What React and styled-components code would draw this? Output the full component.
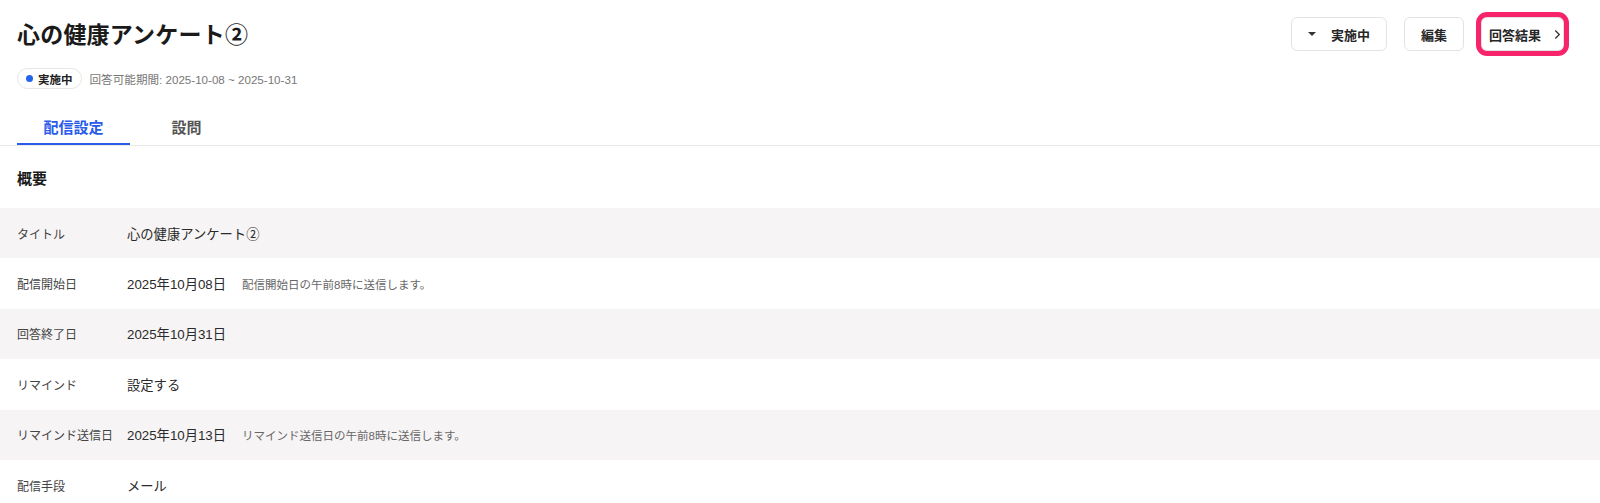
import React from "react";
import styled, { createGlobalStyle } from "styled-components";

const GlobalStyle = createGlobalStyle`
  body {
    margin: 0;
    background: #ffffff;
    font-family: "Liberation Sans", "Noto Sans CJK JP", sans-serif;
    color: #222;
  }
`;

const rows = [
  { label: "タイトル", value: "心の健康アンケート②" },
  { label: "配信開始日", value: "2025年10月08日", note: "配信開始日の午前8時に送信します。" },
  { label: "回答終了日", value: "2025年10月31日" },
  { label: "リマインド", value: "設定する" },
  { label: "リマインド送信日", value: "2025年10月13日", note: "リマインド送信日の午前8時に送信します。" },
  { label: "配信手段", value: "メール" },
];

const App = () => {
  return (
    <Page>
      <GlobalStyle />
      <Header>
        <TitleRow>
          <Title>心の健康アンケート②</Title>
          <Actions>
            <Button>
              <Caret />
              実施中
            </Button>
            <Button>編集</Button>
            <Button $highlight>
              回答結果
              <Chevron viewBox="0 0 8 12" width="7" height="11">
                <path d="M1.5 1.5 L6 6 L1.5 10.5" fill="none" stroke="#333" strokeWidth="1.5" />
              </Chevron>
            </Button>
          </Actions>
        </TitleRow>
        <Meta>
          <StatusBadge>
            <Dot />
            実施中
          </StatusBadge>
          <Period>回答可能期間: 2025-10-08 ~ 2025-10-31</Period>
        </Meta>
      </Header>

      <Tabs>
        <Tab $active>配信設定</Tab>
        <Tab>設問</Tab>
      </Tabs>

      <SectionTitle>概要</SectionTitle>

      <List>
        {rows.map((row, i) => (
          <Row key={row.label} $striped={i % 2 === 0}>
            <Label>{row.label}</Label>
            <Value>{row.value}</Value>
            {row.note && <Note>{row.note}</Note>}
          </Row>
        ))}
      </List>
    </Page>
  );
};

const Page = styled.div`
  width: 100%;
`;

const Header = styled.header`
  padding: 17px 36px 0 17px;
`;

const TitleRow = styled.div`
  display: flex;
  justify-content: space-between;
  align-items: center;
  height: 34px;
`;

const Title = styled.h1`
  margin: 0 0 3px;
  font-size: 23px;
  font-weight: 700;
  color: #1a1a1a;
  letter-spacing: 0.2px;
`;

const Actions = styled.div`
  display: flex;
  gap: 17px;
`;

const Button = styled.button`
  display: flex;
  align-items: center;
  gap: ${(p) => (p.$highlight ? "13px" : "15px")};
  height: 34px;
  padding: ${(p) => (p.$highlight ? "0 2px 0 7px" : "0 16px")};
  background: #fff;
  border: 1px solid #e3e3e3;
  border-radius: 6px;
  font-family: "Liberation Sans", "Noto Sans CJK JP", sans-serif;
  font-size: 13px;
  font-weight: 600;
  color: #262626;
  outline: ${(p) => (p.$highlight ? "5px solid #f7236b" : "none")};
  outline-offset: 0;
  cursor: pointer;
`;

const Caret = styled.span`
  width: 0;
  height: 0;
  border-left: 4px solid transparent;
  border-right: 4px solid transparent;
  border-top: 4px solid #333;
`;

const Chevron = styled.svg`
  display: block;
`;

const Meta = styled.div`
  display: flex;
  align-items: center;
  gap: 8px;
  margin-top: 17px;
`;

const StatusBadge = styled.span`
  display: inline-flex;
  align-items: center;
  gap: 5px;
  height: 21px;
  padding: 0 8px 0 8px;
  border: 1px solid #e6e6e6;
  border-radius: 11px;
  box-sizing: border-box;
  font-size: 11.5px;
  font-weight: 700;
  color: #222;
`;

const Dot = styled.span`
  width: 7px;
  height: 7px;
  border-radius: 50%;
  background: #2463eb;
`;

const Period = styled.span`
  font-size: 11.6px;
  color: #777;
`;

const Tabs = styled.nav`
  display: flex;
  margin-top: 20px;
  padding-left: 17px;
  border-bottom: 1px solid #e8e8e8;
`;

const Tab = styled.div`
  width: 113px;
  height: 36px;
  display: flex;
  align-items: center;
  justify-content: center;
  font-size: 15px;
  font-weight: 700;
  color: ${(p) => (p.$active ? "#2a5bea" : "#555")};
  border-bottom: 2px solid ${(p) => (p.$active ? "#2a5bea" : "transparent")};
  box-sizing: border-box;
`;

const SectionTitle = styled.h2`
  margin: 0;
  height: 62px;
  display: flex;
  align-items: center;
  padding-left: 17px;
  font-size: 15px;
  font-weight: 700;
  color: #1a1a1a;
`;

const List = styled.div`
  display: flex;
  flex-direction: column;
`;

const Row = styled.div`
  display: flex;
  align-items: center;
  height: 50.4px;
  padding-left: 17px;
  background: ${(p) => (p.$striped ? "#f6f4f4" : "#fff")};
`;

const Label = styled.span`
  width: 110px;
  font-size: 12px;
  color: #444;
`;

const Value = styled.span`
  font-size: 13.3px;
  color: #2a2a2a;
`;

const Note = styled.span`
  margin-left: 16px;
  font-size: 11.5px;
  color: #666;
`;

export default App;
